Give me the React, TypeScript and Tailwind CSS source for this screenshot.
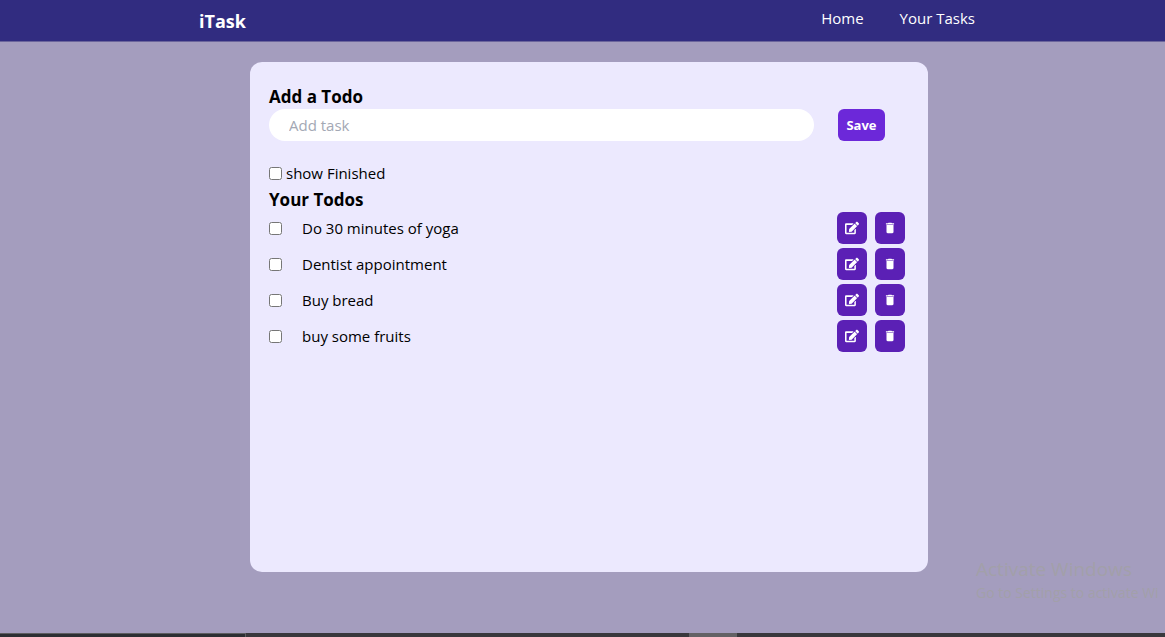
import { useState } from "react";
import type { FormEvent } from "react";
import { FaEdit } from "react-icons/fa";
import { MdDelete } from "react-icons/md";

type Todo = { id: number; text: string; done: boolean };

const initialTodos: Todo[] = [
  { id: 1, text: "Do 30 minutes of yoga", done: false },
  { id: 2, text: "Dentist appointment", done: false },
  { id: 3, text: "Buy bread", done: false },
  { id: 4, text: "buy some fruits", done: false },
];

function Navbar() {
  return (
    <nav className="h-[41px] shrink-0 bg-[#312c80] pl-[9px] text-white">
      <div className="mx-auto flex h-full max-w-[776px] items-center justify-between">
        <span className="text-[18px] leading-6 font-bold">iTask</span>
        <ul className="mb-1.5 flex gap-9 text-[15px] leading-6">
          <li>
            <a href="#home">Home</a>
          </li>
          <li>
            <a href="#tasks">Your Tasks</a>
          </li>
        </ul>
      </div>
    </nav>
  );
}

function TodoRow({
  todo,
  onToggle,
  onEdit,
  onDelete,
}: {
  todo: Todo;
  onToggle: () => void;
  onEdit: () => void;
  onDelete: () => void;
}) {
  const id = `todo-${todo.id}`;
  return (
    <li className="flex h-8 items-center pr-1">
      <input id={id} type="checkbox" checked={todo.done} onChange={onToggle} className="size-[13px]" />
      <label htmlFor={id} className="ml-5 flex-1">
        {todo.text}
      </label>
      <div className="flex gap-2">
        <button
          type="button"
          aria-label="Edit"
          onClick={onEdit}
          className="flex h-8 w-[30px] items-center justify-center rounded-md bg-[#5b20b5] text-white"
        >
          <FaEdit size={14} />
        </button>
        <button
          type="button"
          aria-label="Delete"
          onClick={onDelete}
          className="flex h-8 w-[30px] items-center justify-center rounded-md bg-[#5b20b5] text-white"
        >
          <MdDelete size={14} />
        </button>
      </div>
    </li>
  );
}

export default function App() {
  const [todos, setTodos] = useState<Todo[]>(initialTodos);
  const [text, setText] = useState("");
  const [showFinished, setShowFinished] = useState(false);

  const save = (event: FormEvent) => {
    event.preventDefault();
    if (!text.trim()) return;
    setTodos([...todos, { id: Date.now(), text, done: false }]);
    setText("");
  };

  const remove = (id: number) => setTodos(todos.filter((t) => t.id !== id));

  return (
    <div className="relative flex min-h-screen flex-col overflow-hidden bg-[#a49dbe] font-['Open_Sans','Noto_Sans',sans-serif] text-[15px] leading-6 text-black">
      <Navbar />
      <main className="flex-1 border-t border-[#6b659c] pl-[13px]">
        <div className="mx-auto mt-5 min-h-[80vh] max-w-[678px] rounded-xl bg-[#ece9fe] px-[19px] pt-[22px]">
          <form onSubmit={save}>
            <label htmlFor="new-todo" className="block text-[17px] leading-[25px] font-bold">
              Add a Todo
            </label>
            <div className="flex items-center gap-6 pr-6">
              <input
                id="new-todo"
                value={text}
                onChange={(e) => setText(e.target.value)}
                placeholder="Add task"
                className="h-8 min-w-0 flex-1 rounded-full bg-white px-5 outline-none placeholder:text-[#a3a8b4]"
              />
              <button type="submit" className="h-8 w-[47px] rounded-md bg-[#6c28d9] text-[13px] font-bold text-white">
                Save
              </button>
            </div>
          </form>
          <div className="mt-5 flex items-center gap-1">
            <input
              id="show-finished"
              type="checkbox"
              checked={showFinished}
              onChange={() => setShowFinished(!showFinished)}
              className="size-[13px]"
            />
            <label htmlFor="show-finished">show Finished</label>
          </div>
          <h2 className="pt-0.5 text-[17px] leading-[25px] font-bold">Your Todos</h2>
          <ul className="flex flex-col gap-1">
            {todos
              .filter((t) => showFinished || !t.done)
              .map((t) => (
                <TodoRow
                  key={t.id}
                  todo={t}
                  onToggle={() => setTodos(todos.map((o) => (o.id === t.id ? { ...o, done: !o.done } : o)))}
                  onEdit={() => {
                    setText(t.text);
                    remove(t.id);
                  }}
                  onDelete={() => remove(t.id)}
                />
              ))}
          </ul>
        </div>
      </main>
      <div className="pointer-events-none absolute right-0 bottom-8 w-[189px] whitespace-nowrap text-[#a2a0a9]">
        <p className="text-[19px] leading-6">Activate Windows</p>
        <p className="text-[14px] leading-6">Go to Settings to activate Wi</p>
      </div>
      <footer className="flex h-1 shrink-0 bg-[#39383c]">
        <div className="w-[21.1%] border-t border-r border-[#5d5d60] bg-[#2c2f33]" />
        <div className="ml-[38%] w-12 bg-[#636265]" />
      </footer>
    </div>
  );
}
